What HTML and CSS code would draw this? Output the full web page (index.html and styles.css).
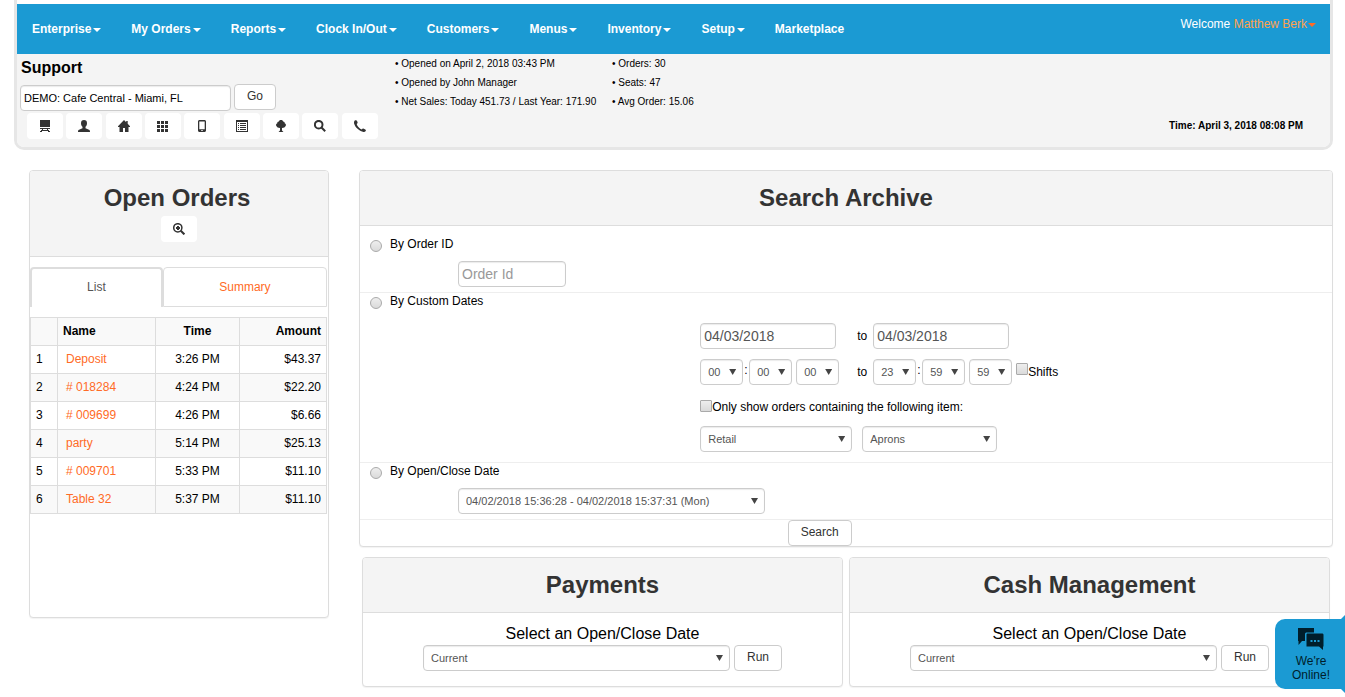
FILE: index.html
```html
<!DOCTYPE html>
<html lang="en">
  <head>
    <title>Support</title>
    <meta charset="UTF-8">
    <meta name="viewport" content="width=device-width,initial-scale=1">
    <link rel="stylesheet" href="styles.css">
  </head>
  <body>
    <header class="header">
      <nav class="navbar">
        <ul class="menu">
          <li><a href="#">Enterprise<span class="caret"></span></a></li>
          <li><a href="#">My Orders<span class="caret"></span></a></li>
          <li><a href="#">Reports<span class="caret"></span></a></li>
          <li><a href="#">Clock In/Out<span class="caret"></span></a></li>
          <li><a href="#">Customers<span class="caret"></span></a></li>
          <li><a href="#">Menus<span class="caret"></span></a></li>
          <li><a href="#">Inventory<span class="caret"></span></a></li>
          <li><a href="#">Setup<span class="caret"></span></a></li>
          <li><a href="#">Marketplace</a></li>
        </ul>
        <div class="welcome">Welcome <a href="#">Matthew Berk<span class="caret"></span></a></div>
      </nav>
      <div class="info">
        <div class="store">
          <h1>Support</h1>
          <form class="store_form">
            <input class="text store_name" type="text" aria-label="Store" value="DEMO: Cafe Central - Miami, FL">
            <button class="btn" type="button">Go</button>
          </form>
          <div class="tools">
            <button class="tool" type="button" aria-label="Terminal"><svg viewBox="0 0 12 12"><path d="M1 0h10v7H1zM1 8h10v1H9v1h1v1h1v1H9v-1H3v1H1v-1h1v-1h1V9H1zM4 9v1h4V9z"/></svg></button>
            <button class="tool" type="button" aria-label="User"><svg viewBox="0 0 12 12"><path d="M6 0c2 0 3 1.200 3 3.200C9 5 8.200 6 7.500 6.800v1.400l3.500 1.600c.700.300 1 .900 1 2.200H0c0-1.300.300-1.900 1-2.200l3.500-1.600V6.800C3.800 6 3 5 3 3.200 3 1.200 4 0 6 0z"/></svg></button>
            <button class="tool" type="button" aria-label="Home"><svg viewBox="0 0 12 12"><path d="M6 0l2.200 2.200V1h1.500v2.700L12 6.200V7h-1.500v5H7V8H5v4H1.500V7H0v-.800z"/></svg></button>
            <button class="tool" type="button" aria-label="Grid"><svg viewBox="0 0 12 12"><path d="M0 1h3v3H0zM4 1h3v3H4zM8 1h3v3H8zM0 5h3v3H0zM4 5h3v3H4zM8 5h3v3H8zM0 9h3v3H0zM4 9h3v3H4zM8 9h3v3H8z"/></svg></button>
            <button class="tool" type="button" aria-label="Phone app"><svg viewBox="0 0 12 12"><path fill-rule="evenodd" d="M3.500 0h5C9.300 0 10 .700 10 1.500v9c0 .800-.700 1.500-1.500 1.500h-5C2.700 12 2 11.300 2 10.500v-9C2 .700 2.700 0 3.500 0zM3.300 1.500v7.700h5.400V1.500zM5.300 10v1h1.400v-1z"/></svg></button>
            <button class="tool" type="button" aria-label="List"><svg viewBox="0 0 12 12"><path fill-rule="evenodd" d="M0 0h12v12H0zM1 2v9h10V2zM2 3h1v1H2zM4 3h6v1H4zM2 5h1v1H2zM4 5h6v1H4zM2 7h1v1H2zM4 7h6v1H4zM2 9h1v1H2zM4 9h6v1H4z"/></svg></button>
            <button class="tool" type="button" aria-label="Tree"><svg viewBox="0 0 12 12"><path d="M6 0c1.300 0 2 .600 2.200 1.500 1 .200 1.600.800 1.500 1.700 1.200.400 1.700 1.800.900 2.800C10 7.300 9 8 7 8v2.500L8.500 12h-5L5 10.500V8C3 8 2 7.300 1.400 6c-.800-1-.300-2.400.900-2.800-.100-.900.500-1.500 1.500-1.700C4 .600 4.700 0 6 0z"/></svg></button>
            <button class="tool" type="button" aria-label="Search"><svg viewBox="0 0 12 12"><g class="stroke"><circle cx="4.700" cy="4.700" r="3.800"/><path d="M7.500 7.500l3.700 3.700"/></g></svg></button>
            <button class="tool" type="button" aria-label="Call"><svg viewBox="0 0 12 12"><path d="M1.300.300C2.200 0 2.700.200 3.100 1l.5 1.400c.2.600 0 .9-.9 1.500.5 2.200 2.900 4.900 5.200 5.500.5-.8.800-1.100 1.400-.9l2 .9c.6.400.8.900.4 1.500-.6 1-1.500 1.300-2.900.9C4.800 10.700 1 7.300.1 3.600-.2 2 .2.800 1.300.300z"/></svg></button>
          </div>
        </div>
        <ul class="facts">
          <li>• Opened on April 2, 2018 03:43 PM</li>
          <li>• Opened by John Manager</li>
          <li>• Net Sales: Today 451.73 / Last Year: 171.90</li>
        </ul>
        <ul class="facts">
          <li>• Orders: 30</li>
          <li>• Seats: 47</li>
          <li>• Avg Order: 15.06</li>
        </ul>
        <div class="time">Time: April 3, 2018 08:08 PM</div>
      </div>
    </header>

    <main class="main">
      <section class="panel orders">
        <div class="panel_head">
          <h2>Open Orders</h2>
          <button class="tool" type="button" aria-label="Zoom in"><svg viewBox="0 0 12 12"><g class="stroke thin"><circle cx="4.800" cy="4.800" r="4.100"/></g><path class="stroke" d="M7.800 7.800l3.600 3.600"/><path d="M4 3h2v1h1v2H6v1H4V6H3V4h1z"/></svg></button>
        </div>
        <div class="tabs">
          <a class="tab active" href="#">List</a>
          <a class="tab" href="#">Summary</a>
        </div>
        <table class="order_table">
          <thead>
            <tr><th class="no"></th><th class="name">Name</th><th class="hour">Time</th><th class="amount">Amount</th></tr>
          </thead>
          <tbody>
            <tr><td>1</td><td class="name"><a href="#">Deposit</a></td><td class="hour">3:26 PM</td><td class="amount">$43.37</td></tr>
            <tr><td>2</td><td class="name"><a href="#"># 018284</a></td><td class="hour">4:24 PM</td><td class="amount">$22.20</td></tr>
            <tr><td>3</td><td class="name"><a href="#"># 009699</a></td><td class="hour">4:26 PM</td><td class="amount">$6.66</td></tr>
            <tr><td>4</td><td class="name"><a href="#">party</a></td><td class="hour">5:14 PM</td><td class="amount">$25.13</td></tr>
            <tr><td>5</td><td class="name"><a href="#"># 009701</a></td><td class="hour">5:33 PM</td><td class="amount">$11.10</td></tr>
            <tr><td>6</td><td class="name"><a href="#">Table 32</a></td><td class="hour">5:37 PM</td><td class="amount">$11.10</td></tr>
          </tbody>
        </table>
      </section>

      <div class="content">
        <section class="panel">
          <div class="panel_head"><h2>Search Archive</h2></div>
          <form class="search">
            <div class="search_row">
              <label class="choice"><input type="radio" name="by">By Order ID</label>
              <div class="field">
                <input class="text order_id" type="text" placeholder="Order Id" aria-label="Order Id">
              </div>
            </div>
            <div class="search_row">
              <label class="choice"><input type="radio" name="by">By Custom Dates</label>
              <div class="dates">
                <div class="range">
                  <div class="from"><input class="text date" type="text" aria-label="From date" value="04/03/2018"></div>
                  <span>to</span>
                  <input class="text date" type="text" aria-label="To date" value="04/03/2018">
                </div>
                <div class="range">
                  <div class="from clock">
                    <span class="select"><select aria-label="From hour"><option>00</option></select></span>
                    <span class="colon">:</span>
                    <span class="select"><select aria-label="From minute"><option>00</option></select></span>
                    <span class="select"><select aria-label="From second"><option>00</option></select></span>
                  </div>
                  <span>to</span>
                  <div class="clock">
                    <span class="select"><select aria-label="To hour"><option>23</option></select></span>
                    <span class="colon">:</span>
                    <span class="select"><select aria-label="To minute"><option>59</option></select></span>
                    <span class="select"><select aria-label="To second"><option>59</option></select></span>
                    <label class="check"><input type="checkbox">Shifts</label>
                  </div>
                </div>
                <label class="check only"><input type="checkbox">Only show orders containing the following item:</label>
                <div class="items">
                  <span class="select group"><select aria-label="Item group"><option>Retail</option></select></span>
                  <span class="select item"><select aria-label="Item"><option>Aprons</option></select></span>
                </div>
              </div>
            </div>
            <div class="search_row">
              <label class="choice"><input type="radio" name="by">By Open/Close Date</label>
              <div class="field">
                <span class="select period"><select aria-label="Open/Close Date"><option>04/02/2018 15:36:28 - 04/02/2018 15:37:31 (Mon)</option></select></span>
              </div>
            </div>
            <div class="search_row submit"><button class="btn" type="button">Search</button></div>
          </form>
        </section>

        <div class="reports">
          <section class="panel">
            <div class="panel_head"><h2>Payments</h2></div>
            <form class="report">
              <label for="payments_date">Select an Open/Close Date</label>
              <div class="run">
                <span class="select period"><select id="payments_date"><option>Current</option></select></span>
                <button class="btn" type="button">Run</button>
              </div>
            </form>
          </section>
          <section class="panel">
            <div class="panel_head"><h2>Cash Management</h2></div>
            <form class="report">
              <label for="cash_date">Select an Open/Close Date</label>
              <div class="run">
                <span class="select period"><select id="cash_date"><option>Current</option></select></span>
                <button class="btn" type="button">Run</button>
              </div>
            </form>
          </section>
        </div>
      </div>
    </main>

    <a class="chat" href="#">
      <svg viewBox="0 0 26 22"><path d="M0 0h16v4.500H9c-1.500 0-2 .500-2 2V13H4l-3.500 4V13H0z"/><path fill-rule="evenodd" d="M9.500 5.500H24c1 0 1.500.500 1.500 1.500v11.500h-.500V22l-4-3.500H8.500V7c0-1 .200-1.500 1-1.500zM12.500 12v2h2v-2zM16 12v2h2v-2zM19.500 12v2h2v-2z"/></svg>
      <span>We're<br>Online!</span>
    </a>
  </body>
</html>
```
FILE: styles.css
```css
*
{
  box-sizing: border-box;
}
body
{
  margin: 0;
  font-family: "Liberation Sans", Arial, sans-serif;
  font-size: 12px;
  line-height: 17px;
  color: #000;
  background-color: #fff;
}
h1, h2, ul
{
  margin: 0;
  padding: 0;
}
ul
{
  list-style: none;
}
a
{
  color: #ff6b26;
  text-decoration: none;
}
input, select, button
{
  margin: 0;
  font-family: inherit;
}

/* header */
.header
{
  margin: 0 12px 0 14px;
  padding-top: 4px;
  border: 3px solid #e6e6e6;
  border-top: 0;
  border-radius: 0 0 10px 10px;
}
.navbar
{
  display: flex;
  justify-content: space-between;
  height: 50px;
  background-color: #1b9ad3;
}
.menu
{
  display: flex;
}
.menu a
{
  display: block;
  padding: 17px 15px 16px;
  font-weight: bold;
  color: #fff;
}
.caret
{
  display: inline-block;
  margin-left: 2px;
  vertical-align: middle;
  border: 4px solid transparent;
  border-top-color: currentColor;
  border-bottom: 0;
}
.welcome
{
  padding: 12px 14px;
  color: #fff;
}
.welcome a
{
  color: #ffa24d;
}
.welcome .caret
{
  margin-left: 1px;
  color: #ff6b26;
}
.info
{
  display: grid;
  grid-template-columns: 378px 217px 1fr auto;
  height: 93px;
  background-color: #f4f4f4;
  border-radius: 0 0 7px 7px;
}
.store
{
  padding-left: 3px;
}
.store h1
{
  padding: 4px 1px;
  font-size: 16px;
  line-height: 20px;
}
.store_form
{
  display: flex;
  gap: 3px;
  padding-top: 2px;
}
.tools
{
  padding: 2px 7px;
}
.facts
{
  font-size: 10px;
  line-height: 19px;
}
.time
{
  align-self: end;
  padding: 0 27px 13px 0;
  font-size: 10px;
  font-weight: bold;
}

/* controls */
.text
{
  height: 26px;
  padding: 0 3px;
  font-size: 14px;
  color: #555;
  background-color: #fff;
  border: 1px solid #ccc;
  border-radius: 4px;
  box-shadow: inset 0 1px 1px rgba(0, 0, 0, 0.08);
}
.store_name
{
  width: 211px;
  margin-top: 1px;
  font-size: 11px;
  color: #000;
}
.text::placeholder
{
  color: #999;
}
.btn
{
  height: 26px;
  padding: 0 12px 2px;
  font-size: 12px;
  color: #333;
  background-color: #fff;
  border: 1px solid #ccc;
  border-radius: 4px;
}
.tool
{
  display: inline-block;
  width: 36px;
  height: 26px;
  padding: 6px 12px;
  vertical-align: top;
  background-color: #fff;
  border: 0;
  border-radius: 4px;
}
.tool svg
{
  display: block;
  width: 12px;
  height: 12px;
  fill: #333;
}
.tool .stroke
{
  fill: none;
  stroke: #333;
  stroke-width: 2;
}
.tool .thin
{
  stroke-width: 1.5;
}
.select
{
  display: inline-grid;
  align-items: center;
}
.select select, .select::after
{
  grid-area: 1 / 1;
}
.select::after
{
  content: "";
  justify-self: end;
  width: 7px;
  height: 6px;
  margin-right: 7px;
  background-color: #444;
  clip-path: polygon(0 0, 100% 0, 50% 100%);
  pointer-events: none;
}
.select select
{
  appearance: none;
  width: 43px;
  height: 26px;
  padding: 0 7px;
  font-size: 11px;
  color: #555;
  background-color: #fff;
  border: 1px solid #ccc;
  border-radius: 4px;
  box-shadow: inset 0 1px 1px rgba(0, 0, 0, 0.08);
}
.period select
{
  width: 307px;
}
.group select
{
  width: 152px;
}
.item select
{
  width: 135px;
}
input[type="radio"], input[type="checkbox"]
{
  appearance: none;
  flex: none;
  width: 12px;
  height: 12px;
  background-image: linear-gradient(#eee, #dadada);
  border: 1px solid #aaa;
  border-radius: 1px;
}
input[type="radio"]
{
  margin-bottom: 1px;
  border-radius: 50%;
}
input:checked
{
  background-image: linear-gradient(#888, #666);
}

/* panels */
.main
{
  display: flex;
  align-items: flex-start;
  gap: 30px;
  padding: 20px 12px 10px 29px;
}
.panel
{
  background-color: #fff;
  border: 1px solid #ddd;
  border-radius: 4px;
  box-shadow: 0 1px 1px rgba(0, 0, 0, 0.05);
}
.panel_head
{
  padding: 12px 0;
  text-align: center;
  background-color: #f4f4f4;
  border-bottom: 1px solid #ddd;
  border-radius: 3px 3px 0 0;
}
.panel_head h2
{
  font-size: 24px;
  line-height: 30px;
  color: #333;
}
.orders
{
  flex: 0 0 300px;
  min-height: 448px;
}
.orders .panel_head
{
  padding: 12px 4px 14px 0;
}
.orders .tool
{
  margin: 3px 0 0 4px;
}
.tabs
{
  display: flex;
  padding: 10px 1px 10px 0;
}
.tab
{
  flex: 165;
  padding: 11px 0 10px;
  text-align: center;
  border: 1px solid #ddd;
  border-radius: 4px 4px 0 0;
}
.tab.active
{
  flex: 131;
  padding: 10px 0 11px;
  color: #555;
  border-width: 2px;
  border-bottom: 0;
}
.order_table
{
  width: 297px;
  table-layout: fixed;
  border-collapse: collapse;
}
.order_table th, .order_table td
{
  height: 28px;
  padding: 0 5px;
  text-align: left;
  border: 1px solid #ddd;
}
.order_table th, .order_table tbody tr:nth-child(even)
{
  background-color: #f9f9f9;
}
.order_table .no
{
  width: 27px;
}
.order_table th.name
{
  width: 98px;
}
.order_table td.name
{
  padding-left: 8px;
}
.order_table .hour
{
  width: 84px;
  text-align: center;
}
.order_table .amount
{
  text-align: right;
}

/* search archive */
.content
{
  flex: 1;
}
.search
{
  padding-top: 10px;
}
.search_row + .search_row
{
  border-top: 1px solid #eee;
}
.choice
{
  display: flex;
  align-items: flex-end;
  gap: 8px;
  width: max-content;
  padding-left: 10px;
}
.field
{
  display: flex;
  padding: 8px 0 5px 98px;
}
.order_id
{
  width: 108px;
}
.dates
{
  display: flex;
  flex-direction: column;
  align-items: flex-start;
  gap: 10px;
  padding: 13px 0 10px 35%;
}
.range
{
  display: flex;
  align-items: center;
}
.range > span
{
  width: 16px;
}
.from
{
  width: 157px;
}
.date
{
  width: 136px;
}
.clock
{
  display: flex;
  gap: 4px;
}
.clock .colon
{
  width: 4px;
  margin: 3px -3px 0;
}
.check
{
  display: flex;
}
.clock .check
{
  padding-top: 4px;
  line-height: 18px;
}
.only
{
  padding-top: 4px;
  line-height: 17px;
}
.only input
{
  margin-top: 1px;
}
.items
{
  display: flex;
  gap: 10px;
}
.submit
{
  padding-left: 44%;
}
.submit .btn
{
  display: block;
}

/* reports */
.reports
{
  display: grid;
  grid-template-columns: 1fr 1fr;
  gap: 6px;
  padding: 10px 3px 0;
}
.report
{
  padding: 10px 0 15px;
  text-align: center;
}
.report label
{
  display: block;
  font-size: 16px;
  line-height: 22px;
}
.run
{
  display: flex;
  justify-content: center;
  gap: 4px;
}

/* chat tab */
.chat
{
  position: fixed;
  right: 0;
  bottom: 8px;
  width: 70px;
  height: 70px;
  padding: 9px 0 0 2px;
  line-height: 14px;
  text-align: center;
  color: #001e2b;
  background-color: #1b9ad3;
  border-radius: 10px 0 0 10px;
}
.chat::before, .chat::after
{
  content: "";
  position: absolute;
  right: 0;
  width: 4px;
  height: 4px;
  background-color: #1b9ad3;
}
.chat::before
{
  bottom: 100%;
  clip-path: polygon(100% 0, 100% 100%, 0 100%);
}
.chat::after
{
  top: 100%;
  clip-path: polygon(0 0, 100% 0, 100% 100%);
}
.chat svg
{
  display: block;
  width: 26px;
  height: 22px;
  margin: 0 auto 4px;
  fill: #001e2b;
}
```
